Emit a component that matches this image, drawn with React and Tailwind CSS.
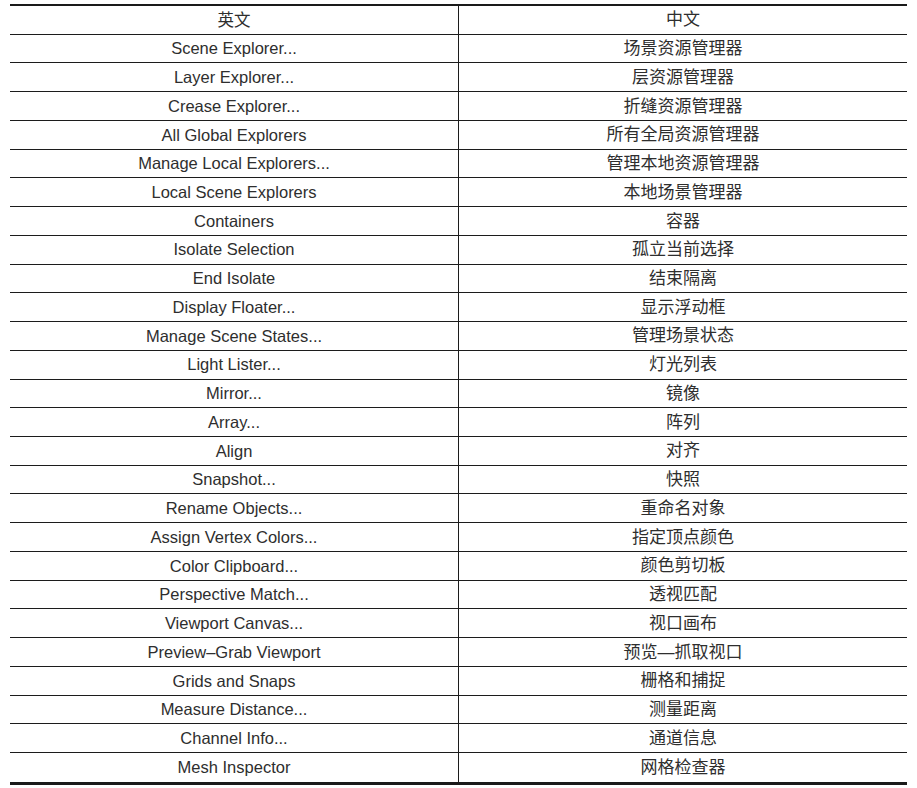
import React from 'react';

const rows = [
  ['Scene Explorer...', '场景资源管理器'],
  ['Layer Explorer...', '层资源管理器'],
  ['Crease Explorer...', '折缝资源管理器'],
  ['All Global Explorers', '所有全局资源管理器'],
  ['Manage Local Explorers...', '管理本地资源管理器'],
  ['Local Scene Explorers', '本地场景管理器'],
  ['Containers', '容器'],
  ['Isolate Selection', '孤立当前选择'],
  ['End Isolate', '结束隔离'],
  ['Display Floater...', '显示浮动框'],
  ['Manage Scene States...', '管理场景状态'],
  ['Light Lister...', '灯光列表'],
  ['Mirror...', '镜像'],
  ['Array...', '阵列'],
  ['Align', '对齐'],
  ['Snapshot...', '快照'],
  ['Rename Objects...', '重命名对象'],
  ['Assign Vertex Colors...', '指定顶点颜色'],
  ['Color Clipboard...', '颜色剪切板'],
  ['Perspective Match...', '透视匹配'],
  ['Viewport Canvas...', '视口画布'],
  ['Preview–Grab Viewport', '预览—抓取视口'],
  ['Grids and Snaps', '栅格和捕捉'],
  ['Measure Distance...', '测量距离'],
  ['Channel Info...', '通道信息'],
  ['Mesh Inspector', '网格检查器'],
];

function Row({ left, right, last }) {
  return (
    <div
      className={`grid grid-cols-[449px_1fr] h-[28.74px] ${
        last ? '' : 'border-b border-[#1c1c1c]'
      }`}
    >
      <div className="flex items-center justify-center border-r border-[#1c1c1c]">{left}</div>
      <div className="flex items-center justify-center text-[17px]">{right}</div>
    </div>
  );
}

export default function App() {
  return (
    <div
      className="w-[917px] h-[788px] bg-white pt-[4px] pl-[10px] text-[16.5px] text-[#2e2e2e] leading-none"
      style={{ fontFamily: '"Liberation Sans", "Noto Sans CJK SC", sans-serif' }}
    >
      <div className="w-[897px] border-t-2 border-b-[3px] border-[#1a1a1a]">
        <Row left="英文" right="中文" />
        {rows.map((r, i) => (
          <Row key={r[0]} left={r[0]} right={r[1]} last={i === rows.length - 1} />
        ))}
      </div>
    </div>
  );
}
